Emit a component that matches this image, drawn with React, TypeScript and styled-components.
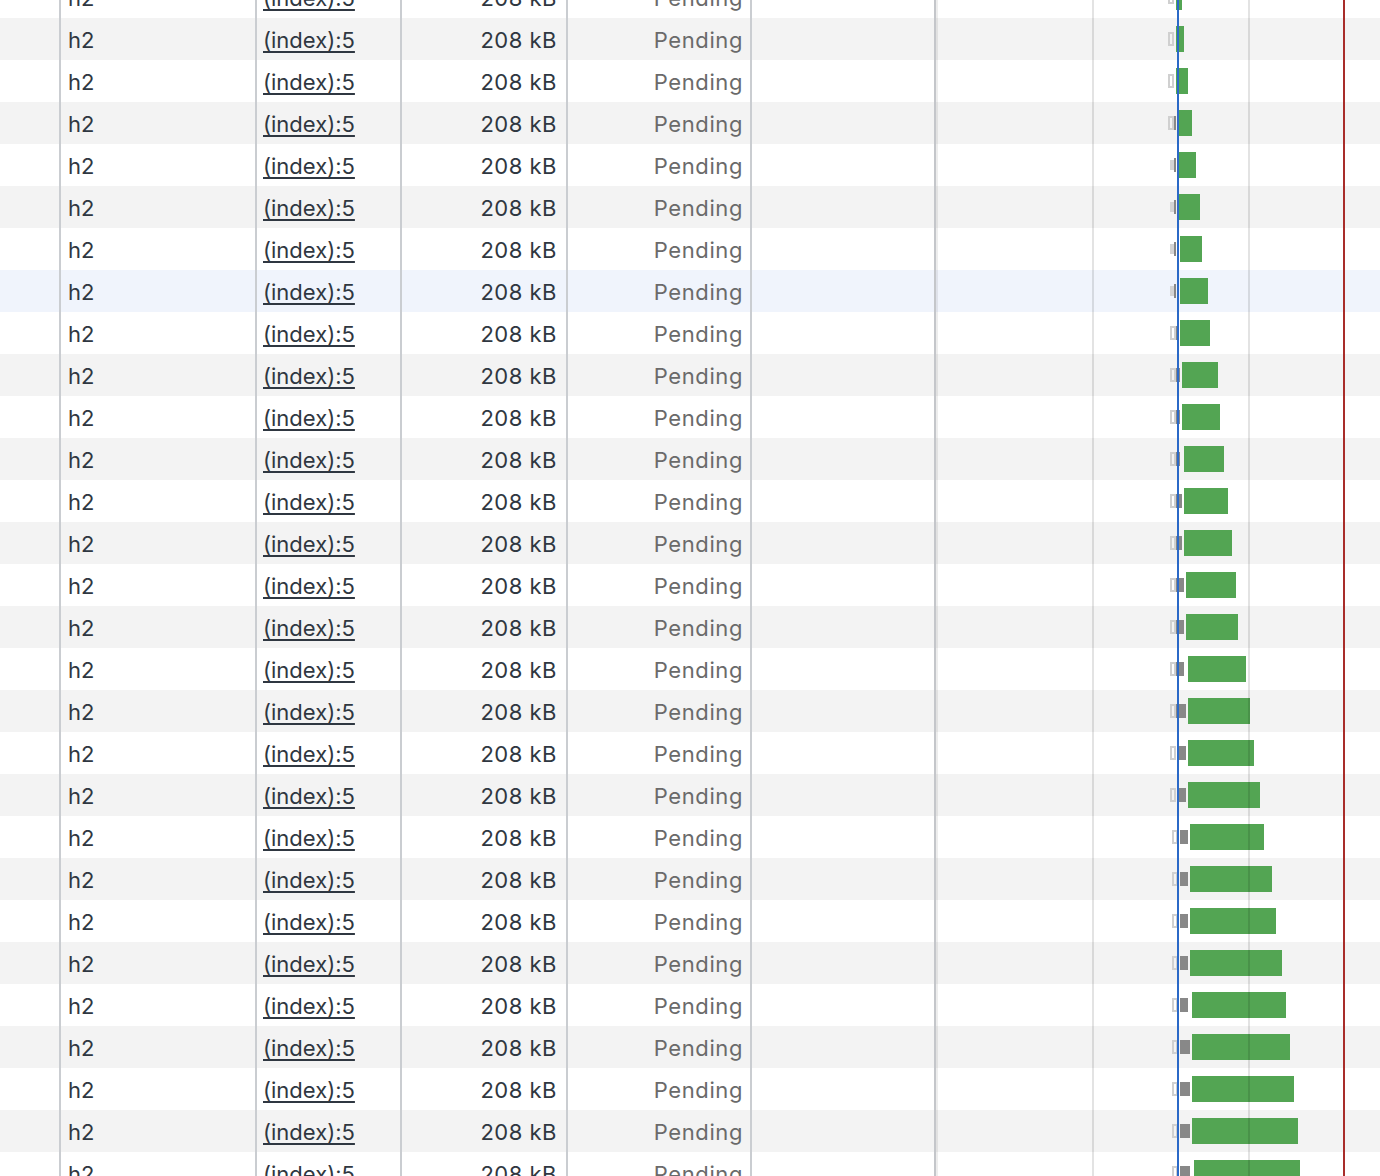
import React from "react";
import styled, { createGlobalStyle } from "styled-components";

const Global = createGlobalStyle`
  html, body { margin: 0; padding: 0; background: #ffffff; overflow: hidden; }
  body { font-family: Inter, "Liberation Sans", Arial, sans-serif; }
`;

const Viewport = styled.div`
  height: 1176px;
  width: 1380px;
  overflow: hidden;
  background: #ffffff;
`;

const List = styled.div`
  margin-top: -24px;
  display: flex;
  flex-direction: column;
`;

const Row = styled.div<{ $bg: string }>`
  display: grid;
  grid-template-columns: 59px 196px 145px 166px 184px 184px 446px;
  height: 42px;
  background: ${(p) => p.$bg};
`;

const Cell = styled.div<{ $align?: "left" | "right"; $pl?: number; $pr?: number; $ls?: number }>`
  box-sizing: border-box;
  border-left: 2px solid #cacdd1;
  padding-top: 1px;
  padding-left: ${(p) => p.$pl ?? 0}px;
  padding-right: ${(p) => p.$pr ?? 0}px;
  text-align: ${(p) => p.$align ?? "left"};
  letter-spacing: ${(p) => p.$ls ?? 0}px;
  font-size: 22px;
  line-height: 42px;
  height: 42px;
  white-space: nowrap;
  overflow: hidden;
  color: #2f3741;
`;

const FirstCell = styled.div`
  height: 42px;
`;

const Link = styled.span`
  text-decoration: underline;
  text-underline-offset: 3px;
  text-decoration-thickness: 2px;
  color: #2f3741;
`;

const Muted = styled.span`
  color: #6a6a6a;
`;

const WaterfallCell = styled.div`
  box-sizing: border-box;
  border-left: 2px solid #c4c6ca;
  height: 42px;
  overflow: hidden;
`;

type Bar = {
  q: [number, number];
  qs?: boolean;
  d?: [number, number];
  g: [number, number];
};

const rows: Bar[] = [
  { q: [1168, 1174], g: [1176, 1182] },
  { q: [1168, 1174], g: [1176, 1184] },
  { q: [1168, 1174], g: [1176, 1188] },
  { q: [1168, 1174], d: [1174, 1176], g: [1179, 1192] },
  { q: [1170, 1174], qs: true, d: [1174, 1176], g: [1179, 1196] },
  { q: [1170, 1174], qs: true, d: [1174, 1176], g: [1179, 1200] },
  { q: [1170, 1174], qs: true, d: [1174, 1176], g: [1180, 1202] },
  { q: [1170, 1174], qs: true, d: [1174, 1176], g: [1180, 1208] },
  { q: [1170, 1176], d: [1176, 1177], g: [1180, 1210] },
  { q: [1170, 1176], d: [1176, 1180], g: [1182, 1218] },
  { q: [1170, 1176], d: [1176, 1180], g: [1182, 1220] },
  { q: [1170, 1176], d: [1176, 1180], g: [1184, 1224] },
  { q: [1170, 1176], d: [1176, 1182], g: [1184, 1228] },
  { q: [1170, 1176], d: [1176, 1182], g: [1184, 1232] },
  { q: [1170, 1176], d: [1176, 1184], g: [1186, 1236] },
  { q: [1170, 1176], d: [1176, 1184], g: [1186, 1238] },
  { q: [1170, 1176], d: [1176, 1184], g: [1188, 1246] },
  { q: [1170, 1176], d: [1176, 1186], g: [1188, 1250] },
  { q: [1170, 1176], d: [1178, 1186], g: [1188, 1254] },
  { q: [1170, 1176], d: [1178, 1186], g: [1188, 1260] },
  { q: [1172, 1178], d: [1180, 1188], g: [1190, 1264] },
  { q: [1172, 1178], d: [1180, 1188], g: [1190, 1272] },
  { q: [1172, 1178], d: [1180, 1188], g: [1190, 1276] },
  { q: [1172, 1178], d: [1180, 1188], g: [1190, 1282] },
  { q: [1172, 1178], d: [1180, 1188], g: [1192, 1286] },
  { q: [1172, 1178], d: [1180, 1190], g: [1192, 1290] },
  { q: [1172, 1178], d: [1180, 1190], g: [1192, 1294] },
  { q: [1172, 1178], d: [1180, 1190], g: [1192, 1298] },
  { q: [1172, 1178], d: [1180, 1190], g: [1194, 1300] },
];

const ORIGIN = 936; // x of waterfall content start (after 2px border at 934)

const Waterfall: React.FC<{ bar: Bar }> = ({ bar }) => {
  const x = (v: number) => v - ORIGIN;
  return (
    <svg width={444} height={42} viewBox="0 0 444 42" style={{ display: "block" }}>
      {bar.qs ? (
        <rect x={x(bar.q[0])} y={16} width={bar.q[1] - bar.q[0]} height={10} fill="#d4d4d4" />
      ) : (
        <rect
          x={x(bar.q[0]) + 1}
          y={15}
          width={bar.q[1] - bar.q[0] - 2}
          height={12}
          fill="none"
          stroke="#d0d0d0"
          strokeWidth={2}
        />
      )}
      {bar.d && (
        <rect x={x(bar.d[0])} y={14} width={bar.d[1] - bar.d[0]} height={14} fill="#888888" />
      )}
      <rect x={x(bar.g[0])} y={8} width={bar.g[1] - bar.g[0]} height={26} fill="#53a553" />
      <rect x={0} y={0} width={2} height={42} fill="rgba(0,0,0,0.07)" />
      <rect x={1092 - ORIGIN} y={0} width={2} height={42} fill="rgba(0,0,0,0.11)" />
      <rect x={1248 - ORIGIN} y={0} width={2} height={42} fill="rgba(0,0,0,0.11)" />
      <rect x={1177 - ORIGIN} y={0} width={2} height={42} fill="#2b69c7" />
      <rect x={1343 - ORIGIN} y={0} width={2} height={42} fill="#a82d2a" />
    </svg>
  );
};

export default function App() {
  return (
    <>
      <Global />
      <Viewport>
        <List>
          {rows.map((bar, idx) => {
            const i = idx - 1;
            const bg = i === 6 ? "#f0f4fc" : i % 2 === 0 ? "#f3f3f3" : "#ffffff";
            return (
              <Row key={idx} $bg={bg}>
                <FirstCell />
                <Cell $pl={7}>h2</Cell>
                <Cell $pl={6}>
                  <Link>(index):5</Link>
                </Cell>
                <Cell $align="right" $pr={9} $ls={0.5}>
                  208 kB
                </Cell>
                <Cell $align="right" $pr={7} $ls={0.6}>
                  <Muted>Pending</Muted>
                </Cell>
                <Cell />
                <WaterfallCell>
                  <Waterfall bar={bar} />
                </WaterfallCell>
              </Row>
            );
          })}
        </List>
      </Viewport>
    </>
  );
}
